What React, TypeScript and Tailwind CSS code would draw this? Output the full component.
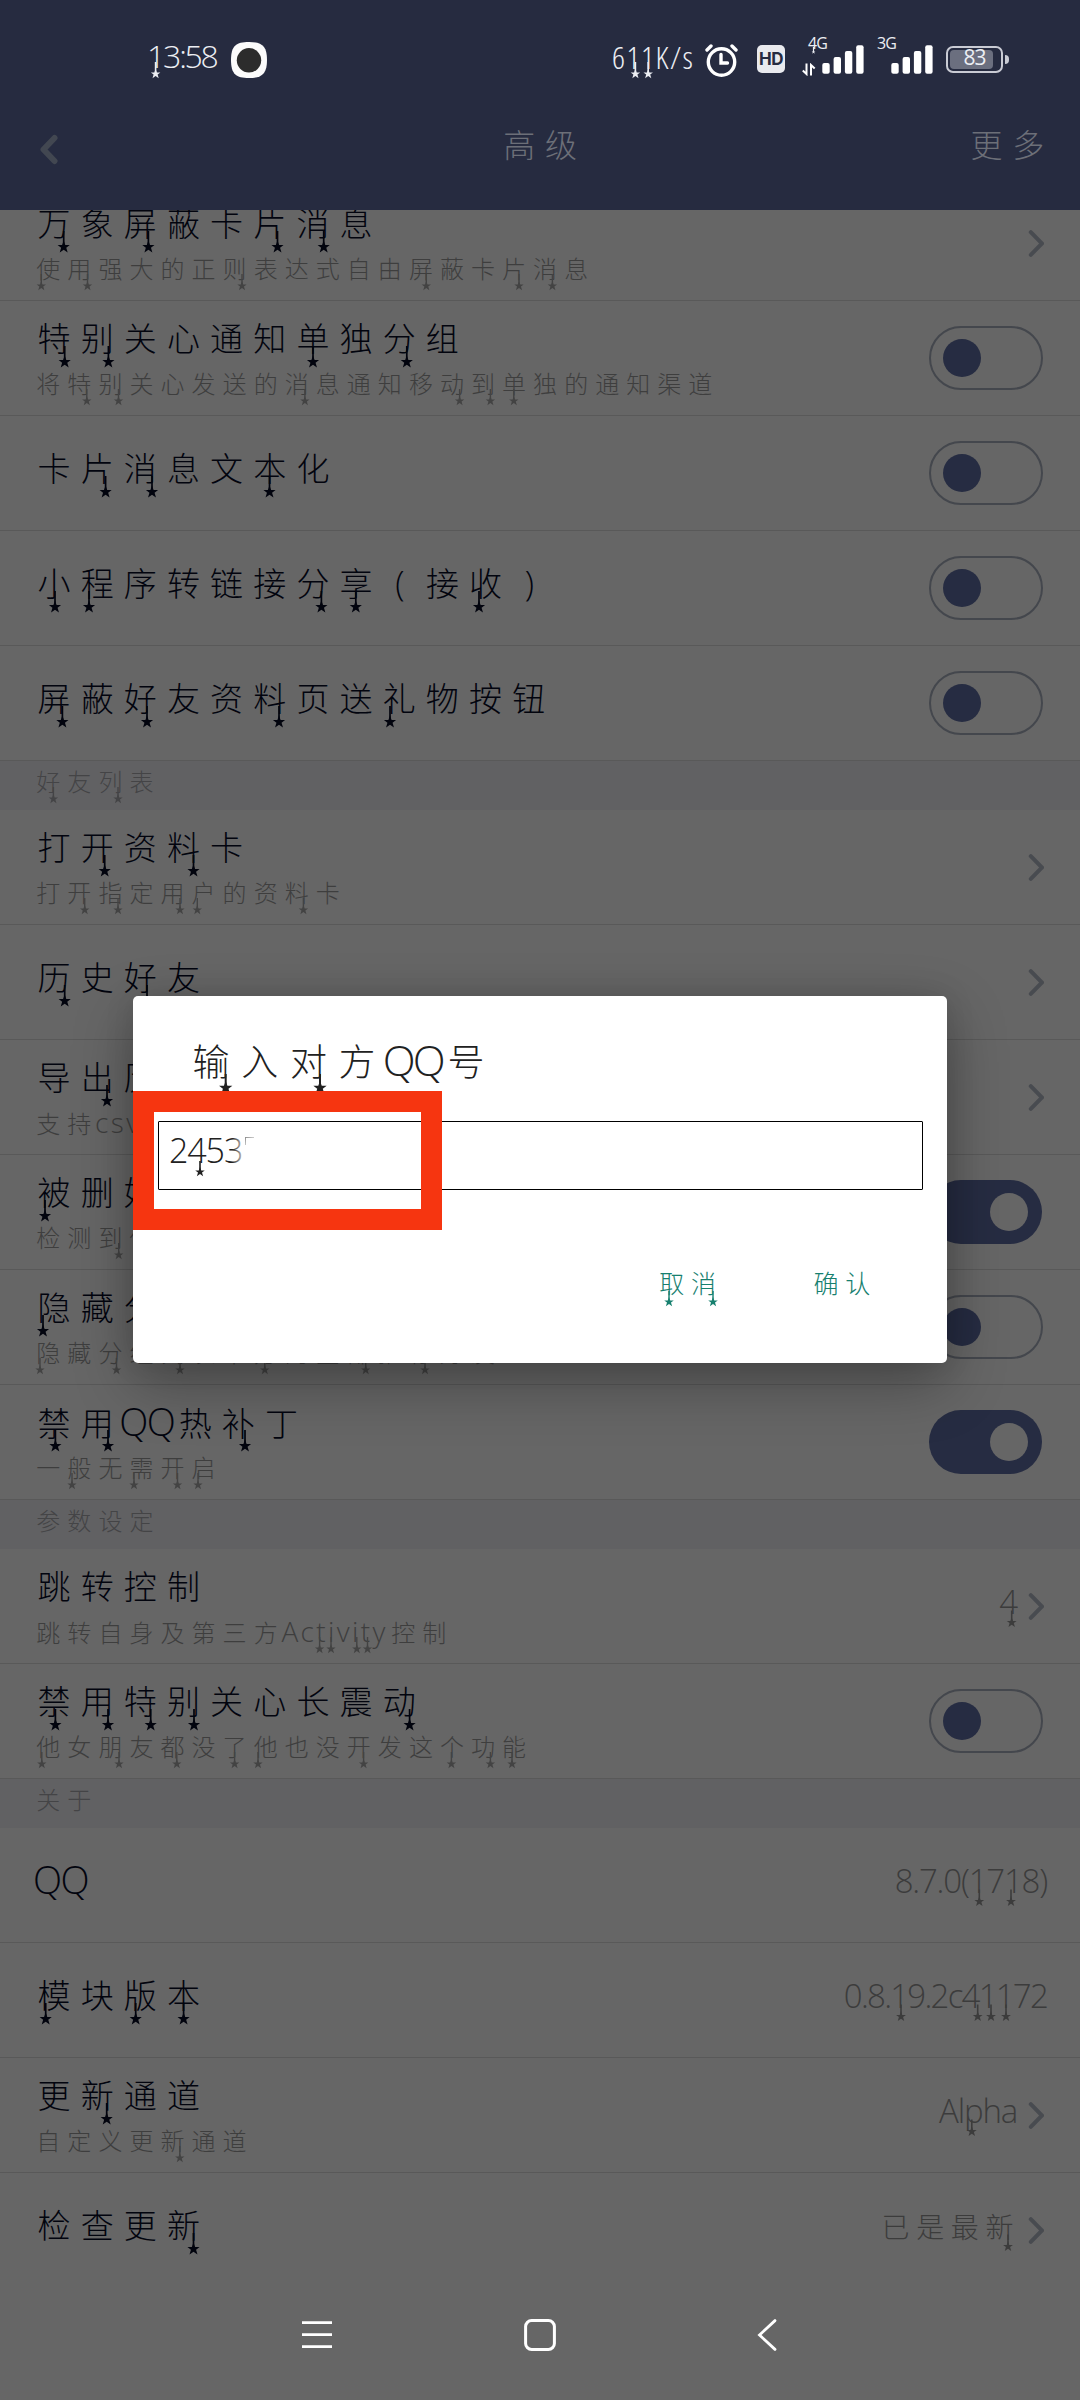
import React from "react";

type Size = "title" | "sub" | "value" | "version" | "head" | "dialog" | "button";

const CJK = "font-['Noto_Sans_CJK_SC','Noto_Sans',sans-serif] font-light";
const LATIN = "font-['Open_Sans','Noto_Sans',sans-serif] font-light";

const cjkSize: Record<Size, string> = {
  title: "text-[33px] tracking-[10.15px] ml-[4.5px] mr-[-4.5px]",
  sub: "text-[24px] tracking-[7.05px] ml-[3.3px] mr-[-3.3px]",
  value: "text-[28px] tracking-[6.6px] ml-[3px] mr-[-3px]",
  version: "text-[28px]",
  head: "text-[32px] tracking-[9.8px] ml-[5px] mr-[-5px]",
  dialog: "text-[37px] tracking-[11.7px] ml-[4.5px] mr-[-4.5px]",
  button: "text-[25px] tracking-[6.7px] ml-[4px] mr-[-4px]",
};

const latinSize: Record<Size, string> = {
  title: "text-[38px] tracking-[-1.6px]",
  sub: "text-[28px] tracking-[2.4px]",
  value: "text-[33px] tracking-[-1.2px]",
  version: "text-[33px] tracking-[-1.75px]",
  head: "text-[33px]",
  dialog: "text-[43px] tracking-[-2.8px]",
  button: "text-[28px]",
};

function Txt({ children, size }: { children: string; size: Size }) {
  const runs = children.match(/[\u3000-\u9fff]+|[（）]|[\x20-\x7e]+/g) ?? [];
  return (
    <>
      {runs.map((r, i) =>
        /[（）]/.test(r) ? (
          <span key={i} className="inline-block w-[43.2px] text-center font-['Open_Sans',sans-serif] text-[34px] font-light leading-none">
            {r === "（" ? "(" : ")"}
          </span>
        ) : /[\x20-\x7e]/.test(r[0]) ? (
          <span key={i} className={`${LATIN} ${latinSize[size]}`}>{r}</span>
        ) : (
          <span key={i} className={`${CJK} ${cjkSize[size]}`}>{r}</span>
        )
      )}
    </>
  );
}

/* Small star hanging on a thin stalk below a stroke of the text. */
function Stars({ xs, y, r, stalk, w = 1.6 }: { xs: number[]; y: number; r: number; stalk: number; w?: number }) {
  return (
    <svg className="pointer-events-none absolute left-0 top-0 overflow-visible" width="1" height="1" fill="currentColor">
      {xs.map((x, i) => (
        <g key={i} transform={`translate(${x} ${y})`}>
          <rect x={-w / 2} y={-stalk} width={w} height={stalk} />
          <path transform={`scale(${r})`} d="M0-1 .25-.31 .95-.31 .4.12 .62.85 0 .42-.62.85-.4.12-.95-.31-.25-.31Z" />
        </g>
      ))}
    </svg>
  );
}

function Toggle({ on }: { on: boolean }) {
  return on ? (
    <span className="mr-[1.5px] flex h-16 w-[113px] items-center rounded-full bg-[#262c42] pl-[61px]">
      <span className="size-[38px] rounded-full bg-[#666666]" />
    </span>
  ) : (
    <span className="mr-px flex h-16 w-[114px] items-center rounded-full border-2 border-[#44474d] pl-3">
      <span className="size-[38px] rounded-full bg-[#262c42]" />
    </span>
  );
}

function Chevron() {
  return (
    <svg className="ml-[11px]" width="16" height="27" viewBox="0 0 16 27" fill="none" stroke="#484b50" strokeWidth="4" strokeLinecap="round">
      <path d="M2.8 2.2 14 13.5 2.8 24.8" />
    </svg>
  );
}

type RowData = {
  title: string;
  ts?: number[];
  sub?: string;
  ss?: number[];
  toggle?: boolean;
  arrow?: boolean;
  value?: string;
  valueSize?: Size;
  vs?: number[];
  last?: boolean;
};

function Row({ title, ts = [], sub, ss = [], toggle, arrow, value, valueSize = "value", vs = [], last }: RowData) {
  return (
    <div className={`relative flex h-[115px] shrink-0 justify-between border-b pr-9 ${last ? "border-transparent" : "border-[#595959]"}`}>
      <div className={`pl-[33px] ${sub ? "pt-[13px]" : "pt-[28px]"}`}>
        <div className="h-[46px] whitespace-nowrap text-[33px] leading-[46px] text-[#02040e]">
          <Txt size="title">{title}</Txt>
        </div>
        {sub && (
          <div className="h-[46px] whitespace-nowrap text-[24px] leading-[46px] text-[#3e3e3e]">
            <Txt size="sub">{sub}</Txt>
          </div>
        )}
      </div>
      <div className="text-[#02040e]">
        <Stars xs={ts} y={sub ? 61 : 76} r={6.4} stalk={16} w={1.7} />
      </div>
      <div className="text-[#434343]">
        <Stars xs={ss} y={100} r={4.9} stalk={12} w={1.4} />
      </div>
      <div className="flex items-center">
        {value && (
          <div className={`h-[46px] whitespace-nowrap text-[28px] leading-[46px] text-[#3c3c3c] ${arrow ? "" : "mr-[-3px]"} -mt-2`}>
            <Txt size={valueSize}>{value}</Txt>
            <Stars xs={vs} y={73.5} r={5.2} stalk={12} w={1.6} />
          </div>
        )}
        {toggle !== undefined && <Toggle on={toggle} />}
        {arrow && <Chevron />}
      </div>
    </div>
  );
}

function Section({ children, ss = [] }: { children: string; ss?: number[] }) {
  return (
    <div className="relative h-[49px] shrink-0 bg-[#616163] pl-[33px] text-[24px] leading-[39px] text-[#444446]">
      <Txt size="sub">{children}</Txt>
      <Stars xs={ss} y={38} r={4.9} stalk={12} w={1.4} />
    </div>
  );
}

function Signal() {
  return (
    <svg width="42" height="29" viewBox="0 0 42 29" fill="#fff">
      <rect x="0.3" y="18" width="7.4" height="10.7" rx="2" />
      <rect x="11.6" y="12" width="7.4" height="16.7" rx="2" />
      <rect x="22.9" y="6" width="7.4" height="22.7" rx="2" />
      <rect x="34.2" y="0.3" width="7.4" height="28.4" rx="2" />
    </svg>
  );
}

function StatusBar() {
  return (
    <div className={`relative flex h-[120px] shrink-0 text-[#eceef3] ${LATIN}`}>
      <span className="ml-[147px] mt-[33px] w-[84px] text-[32px] leading-[46px] tracking-[-2.2px]">13:58</span>
      <svg className="mt-[42px]" width="36" height="36" viewBox="0 0 36 36">
        <path d="M18 0C31 0 36 4 36 18S31 36 18 36 0 32 0 18 5 0 18 0Z" fill="#fbfbfb" />
        <circle cx="18" cy="18.3" r="12.2" fill="#2c2c2c" />
      </svg>
      <span className="ml-[345px] mt-[34px] w-[93px] text-[32px] leading-[46px] tracking-[1.5px] [font-stretch:85%]">611K/s</span>
      <svg className="mt-[43px]" width="33" height="34" viewBox="0 0 33 34" fill="none" stroke="#fff" strokeWidth="3.4" strokeLinecap="round">
        <circle cx="16.5" cy="19" r="13.2" />
        <path d="M16 11.5V20h6.5M2 7l4-4M31 7l-4-4" />
      </svg>
      <span className="ml-[19px] mt-[45px] flex h-7 w-7 items-center justify-center rounded-[5px] bg-[#e9eaee] font-['Inter',sans-serif] text-[17px] font-bold leading-none tracking-[-0.5px] text-[#262b40]">HD</span>
      <div className="relative ml-[17px] mt-[45px] h-7 w-[20px]">
        <span className="absolute left-[6px] top-[-12px] text-[16px] leading-[20px] font-normal tracking-[-1px]">4G</span>
        <svg className="absolute left-0 top-[18px]" width="14" height="13" viewBox="0 0 14 13" fill="none" stroke="#fff" strokeWidth="2">
          <path d="M4.5 0.5V11L0.8 7.5M9 12.5V2l3.7 3.5" />
        </svg>
      </div>
      <div className="mt-[45px]"><Signal /></div>
      <div className="relative ml-[27px] mt-[45px]">
        <span className="absolute left-[-14px] top-[-12px] text-[16px] leading-[20px] font-normal tracking-[-1px]">3G</span>
        <Signal />
      </div>
      <div className="relative ml-[13px] mt-[46px] h-[27px] w-[57px] rounded-[7px] border-2 border-[#c9cbd4] p-[2px]">
        <div className="h-full w-[43px] rounded-[4px] bg-[#6b6f7f]" />
        <span className="absolute inset-x-0 top-[-5px] text-center text-[21px] font-normal leading-[28px] tracking-[-1px]">83</span>
      </div>
      <div className="ml-[2px] mt-[55px] h-[9px] w-[4px] rounded-r-full bg-[#c9cbd4]" />
      <Stars xs={[155.6, 635.4, 648.2]} y={74} r={5} stalk={12} />
      <Stars xs={[813.5]} y={52} r={2} stalk={5} w={1.2} />
    </div>
  );
}

function Header() {
  return (
    <div className="grid h-[90px] shrink-0 grid-cols-3 items-start text-[#6c6f78]">
      <svg className="ml-[39px] mt-[14px]" width="20" height="31" viewBox="0 0 20 31" fill="none" stroke="#424751" strokeWidth="6" strokeLinecap="round" strokeLinejoin="round">
        <path d="M15.5 4 4.5 15.5 15.5 27" />
      </svg>
      <div className="text-center leading-[46px]"><Txt size="head">高级</Txt></div>
      <div className="pr-[31px] text-right leading-[46px]"><Txt size="head">更多</Txt></div>
    </div>
  );
}

function Dialog() {
  return (
    <div className="absolute left-[133px] top-[996px] flex h-[367px] w-[814px] flex-col rounded-[5px] bg-white px-[25px] text-[#212121] shadow-[0_20px_60px_rgba(0,0,0,0.32),0_0_30px_rgba(0,0,0,0.1)]">
      <div className="mt-[36px] h-[56px] whitespace-nowrap pl-[30px] text-[37px] leading-[56px]"><Txt size="dialog">输入对方QQ号</Txt></div>
      <Stars xs={[92.7, 187]} y={92} r={7} stalk={14} w={2} />
      <div className="relative mt-[33px] h-[69px] w-[765px] rounded-[1px] border border-black">
        <span className={`absolute left-[10px] top-[3px] text-[34px] leading-[50px] tracking-[-1.1px] ${LATIN}`}>2453</span>
        <div className="absolute left-[73px] top-[14px] h-[28px] w-[13px] bg-gradient-to-r from-white/0 to-white/90" />
        <div className="absolute left-[86px] top-[15px] h-[8px] w-[9px] border-l border-t border-[#8b8b8b] [mask-image:linear-gradient(135deg,black,transparent)]" />
        <Stars xs={[41]} y={50} r={5} stalk={11} />
      </div>
      <div className="mt-[69px] flex justify-end gap-[91px] whitespace-nowrap pr-[49px] text-[25px] leading-[46px] text-[#17806f]">
        <span><Txt size="button">取消</Txt></span>
        <span><Txt size="button">确认</Txt></span>
      </div>
      <div className="text-[#17806f]"><Stars xs={[536, 580]} y={306} r={5} stalk={11} w={1.4} /></div>
      <div className="absolute left-0 top-[95px] h-[139px] w-[309px] border-[21px] border-[#f63510]" />
    </div>
  );
}

export default function App() {
  return (
    <div className="relative flex h-[2400px] w-[1080px] flex-col overflow-hidden bg-[#666666]">
      <div className="relative z-10 flex h-[210px] shrink-0 flex-col bg-[#262b40]">
        <StatusBar />
        <Header />
      </div>
      <div className="mt-[-24px] flex shrink-0 flex-col">
        <Row title="万象屏蔽卡片消息" ts={[63.7, 148.4, 277.5, 323.7]} sub="使用强大的正则表达式自由屏蔽卡片消息" ss={[41.3, 87.5, 242, 426.3, 519, 552.4]} arrow />
        <Row title="特别关心通知单独分组" ts={[64.7, 108.4, 313, 406.8]} sub="将特别关心发送的消息通知移动到单独的通知渠道" ss={[86.8, 118.5, 304.9, 459.6, 490.4, 513.8]} toggle={false} />
        <Row title="卡片消息文本化" ts={[105.6, 152, 269.5]} toggle={false} />
        <Row title="小程序转链接分享（接收）" ts={[55, 89, 321.4, 355.8, 479]} toggle={false} />
        <Row title="屏蔽好友资料页送礼物按钮" ts={[62.4, 147, 279, 390]} toggle={false} />
        <Section ss={[53.4, 118]}>好友列表</Section>
        <Row title="打开资料卡" ts={[104.7, 193.5]} sub="打开指定用户的资料卡" ss={[84.7, 118, 180, 197.3, 303.4]} arrow />
        <Row title="历史好友" ts={[64.7, 147]} arrow />
        <Row title="导出历" ts={[107]} sub="支持csv" arrow />
        <Row title="被删好" ts={[45]} sub="检测到你" ss={[118.7]} toggle={true} />
        <Row title="隐藏分" ts={[43]} sub="隐藏分组列表下方的全部推荐好友" ss={[40, 116.5, 180, 264.8, 365.7, 425]} toggle={false} />
        <Row title="禁用QQ热补丁" ts={[55.4, 108, 245]} sub="一般无需开启" ss={[72, 134, 177.5, 198]} toggle={true} />
        <Section>参数设定</Section>
        <Row title="跳转控制" sub="跳转自身及第三方Activity控制" ss={[319.6, 331, 356.8, 367.5]} value="4" vs={[1011.7]} arrow />
        <Row title="禁用特别关心长震动" ts={[55.4, 108, 150.7, 194, 409.6]} sub="他女朋友都没了他也没开发这个功能" ss={[41.8, 119, 176.8, 234.6, 258, 363.6, 451.4, 490.4, 512]} toggle={false} />
        <Section>关于</Section>
        <Row title="QQ" value="8.7.0(1718)" vs={[979.3, 1011]} />
        <Row title="模块版本" ts={[45.7, 135.7, 183.6]} value="0.8.19.2c41172" valueSize="version" vs={[901, 977.7, 991, 1006]} />
        <Row title="更新通道" ts={[106.7]} sub="自定义更新通道" ss={[179.8]} value="Alpha" vs={[971.8]} arrow />
        <Row title="检查更新" ts={[193.5]} value="已是最新" vs={[1008]} arrow last />
      </div>
      <div className="flex flex-1 shrink-0">
        <svg className="ml-[301px] mt-[31px]" width="32" height="32" viewBox="0 0 32 32" stroke="#fff" strokeWidth="2.8">
          <path d="M1 3.7h30M1 15.7h30M1 27.7h30" />
        </svg>
        <svg className="ml-[191px] mt-[31px]" width="32" height="32" viewBox="0 0 32 32" fill="none" stroke="#fff" strokeWidth="3">
          <rect x="1.6" y="1.6" width="28.8" height="28.8" rx="6" />
        </svg>
        <svg className="ml-[201px] mt-[31px]" width="20" height="32" viewBox="0 0 20 32" fill="none" stroke="#fff" strokeWidth="2.8" strokeLinecap="round">
          <path d="M18 1.6 2.5 16 18 30.4" />
        </svg>
      </div>
      <Dialog />
    </div>
  );
}
